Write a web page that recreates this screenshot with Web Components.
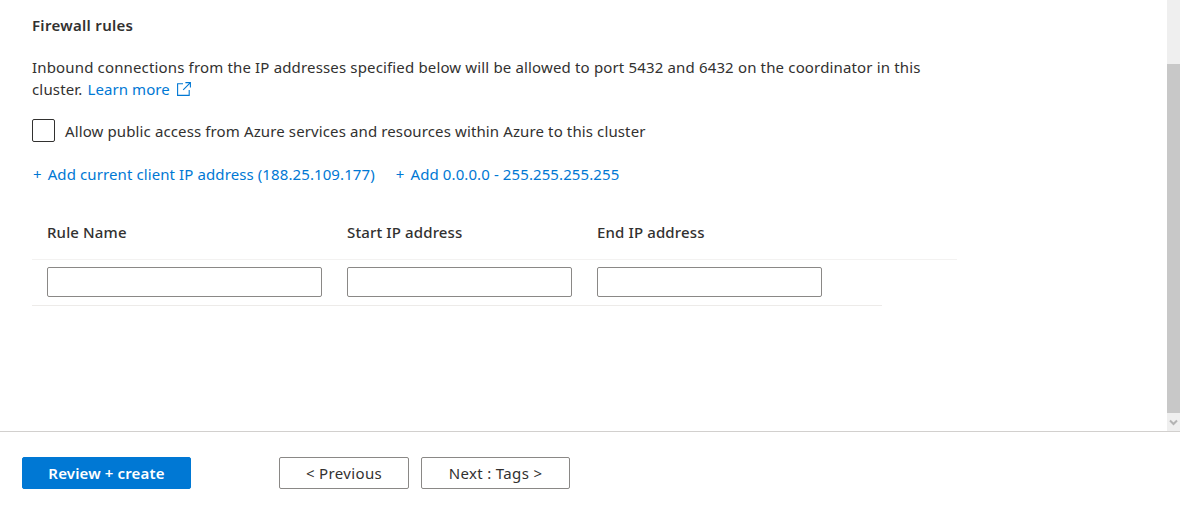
<!DOCTYPE html>
<html lang="en">
<head>
<meta charset="utf-8">
<title>Firewall rules</title>
<style>
  html, body { margin: 0; height: 100%; overflow: hidden; background: #fff; }
  body { font: 15px/21px "Noto Sans", "Open Sans", sans-serif; letter-spacing: .12px; color: #323130; }
</style>
</head>
<body>
<template id="wizard-page-tpl">
  <style>
    :host { display: flex; flex-direction: column; height: 509px; }
    .body { flex: none; height: 431px; display: flex; }
    .content { flex: 1; min-width: 0; padding: 15px 0 0 32px; }
    .footer { flex: 1; border-top: 1px solid #d2d0ce; padding: 25px 22px 0; display: flex; align-items: flex-start; }
    .nav { display: flex; gap: 12px; margin-left: 88px; }
  </style>
  <div class="body">
    <div class="content"><slot></slot></div>
    <page-scrollbar></page-scrollbar>
  </div>
  <div class="footer">
    <slot name="primary"></slot>
    <div class="nav"><slot name="nav"></slot></div>
  </div>
</template>

<template id="scrollbar-tpl">
  <style>
    :host { display: flex; flex-direction: column; flex: none; width: 13px; background: #efefef; }
    .track { height: 64px; }
    .thumb { flex: 1; background: #c8c8c8; }
    .down { height: 18px; display: flex; align-items: center; justify-content: center; }
    svg { display: block; }
  </style>
  <div class="track"></div>
  <div class="thumb"></div>
  <div class="down">
    <svg width="9" height="7" viewBox="0 0 9 7"><path d="M1 1.5 4.5 5 8 1.5" fill="none" stroke="#b4b4b4" stroke-width="2"/></svg>
  </div>
</template>

<template id="firewall-section-tpl">
  <style>
    :host { display: block; width: 925px; }
    h2 { margin: 0 0 20px; font-size: 15px; line-height: 21px; font-weight: 600; letter-spacing: .3px; color: #323130; }
    p { margin: 0 0 19px; width: 900px; line-height: 22px; letter-spacing: .155px; color: #323130; }
    a { color: #0078d4; text-decoration: none; }
    p a { letter-spacing: .08px; margin-left: 1px; }
    svg { display: inline-block; vertical-align: -1px; margin-left: 3px; }
    .links { display: flex; gap: 20px; margin: 22px 0 20px; letter-spacing: .1px; }
    .links a span { margin: 0 2px 0 1px; }
  </style>
  <h2>Firewall rules</h2>
  <p>Inbound connections from the IP addresses specified below will be allowed to port 5432 and 6432 on the coordinator in this <span>cluster.</span> <a href="#">Learn more
    <svg width="14" height="14" viewBox="0 0 14 14" fill="none" stroke="#0078d4" stroke-width="1.1"><path d="M6 1.8H.6v11.6h11.6V8M8.4.6h5V5.6M13.4.6 6.2 7.8"/></svg></a></p>
  <fw-checkbox>Allow public access from Azure services and resources within Azure to this cluster</fw-checkbox>
  <div class="links">
    <a href="#"><span>+</span> Add current client IP address (188.25.109.177)</a>
    <a href="#"><span>+</span> Add 0.0.0.0 - 255.255.255.255</a>
  </div>
  <slot></slot>
</template>

<template id="checkbox-tpl">
  <style>
    :host { display: flex; align-items: center; gap: 10px; height: 23px; }
    .box { flex: none; width: 23px; height: 23px; box-sizing: border-box; border: 1px solid #323130; border-radius: 2px; }
    span { padding-top: 1px; }
  </style>
  <div class="box"></div>
  <span><slot></slot></span>
</template>

<template id="rules-table-tpl">
  <style>
    :host { display: block; width: 925px; }
    .row { display: grid; grid-template-columns: 275px 225px 225px; column-gap: 25px; padding-left: 15px; }
    .head { height: 54px; border-bottom: 1px solid #f3f2f1; font-weight: 500; letter-spacing: .13px; align-items: center; }
    .head span { color: #323130; }
    .inputs { width: 835px; padding-top: 7px; padding-bottom: 8px; border-bottom: 1px solid #edebe9; }
    input { display: block; box-sizing: border-box; width: 100%; height: 30px; margin: 0; padding: 0 8px; border: 1px solid #8a8886; border-radius: 2px; background: #fff; font: inherit; }
  </style>
  <div class="row head"><span>Rule Name</span><span>Start IP address</span><span>End IP address</span></div>
  <div class="row inputs">
    <input type="text" aria-label="Rule Name">
    <input type="text" aria-label="Start IP address">
    <input type="text" aria-label="End IP address">
  </div>
</template>

<template id="button-tpl">
  <style>
    :host { display: block; }
    button { display: block; box-sizing: border-box; height: 32px; width: var(--btn-width, 130px); padding: 0; border: 1px solid #8a8886; border-radius: 2px; background: #fff; color: #323130; font: inherit; letter-spacing: .35px; }
    :host([primary]) button { border-color: #0078d4; background: #0078d4; color: #fff; font-weight: 600; letter-spacing: .15px; }
  </style>
  <button type="button"><slot></slot></button>
</template>

<wizard-page>
  <firewall-section><rules-table></rules-table></firewall-section>
  <fw-button slot="primary" primary style="--btn-width:169px">Review + create</fw-button>
  <fw-button slot="nav" style="--btn-width:130px">&lt; Previous</fw-button>
  <fw-button slot="nav" style="--btn-width:149px">Next : Tags &gt;</fw-button>
</wizard-page>

<script>
  function fromTemplate(tagName, templateId) {
    customElements.define(tagName, class extends HTMLElement {
      constructor() {
        super();
        this.attachShadow({ mode: "open" });
        this.shadowRoot.appendChild(document.getElementById(templateId).content.cloneNode(true));
      }
    });
  }

  fromTemplate("page-scrollbar", "scrollbar-tpl");
  fromTemplate("fw-checkbox", "checkbox-tpl");
  fromTemplate("rules-table", "rules-table-tpl");
  fromTemplate("fw-button", "button-tpl");
  fromTemplate("firewall-section", "firewall-section-tpl");
  fromTemplate("wizard-page", "wizard-page-tpl");
</script>
</body>
</html>
